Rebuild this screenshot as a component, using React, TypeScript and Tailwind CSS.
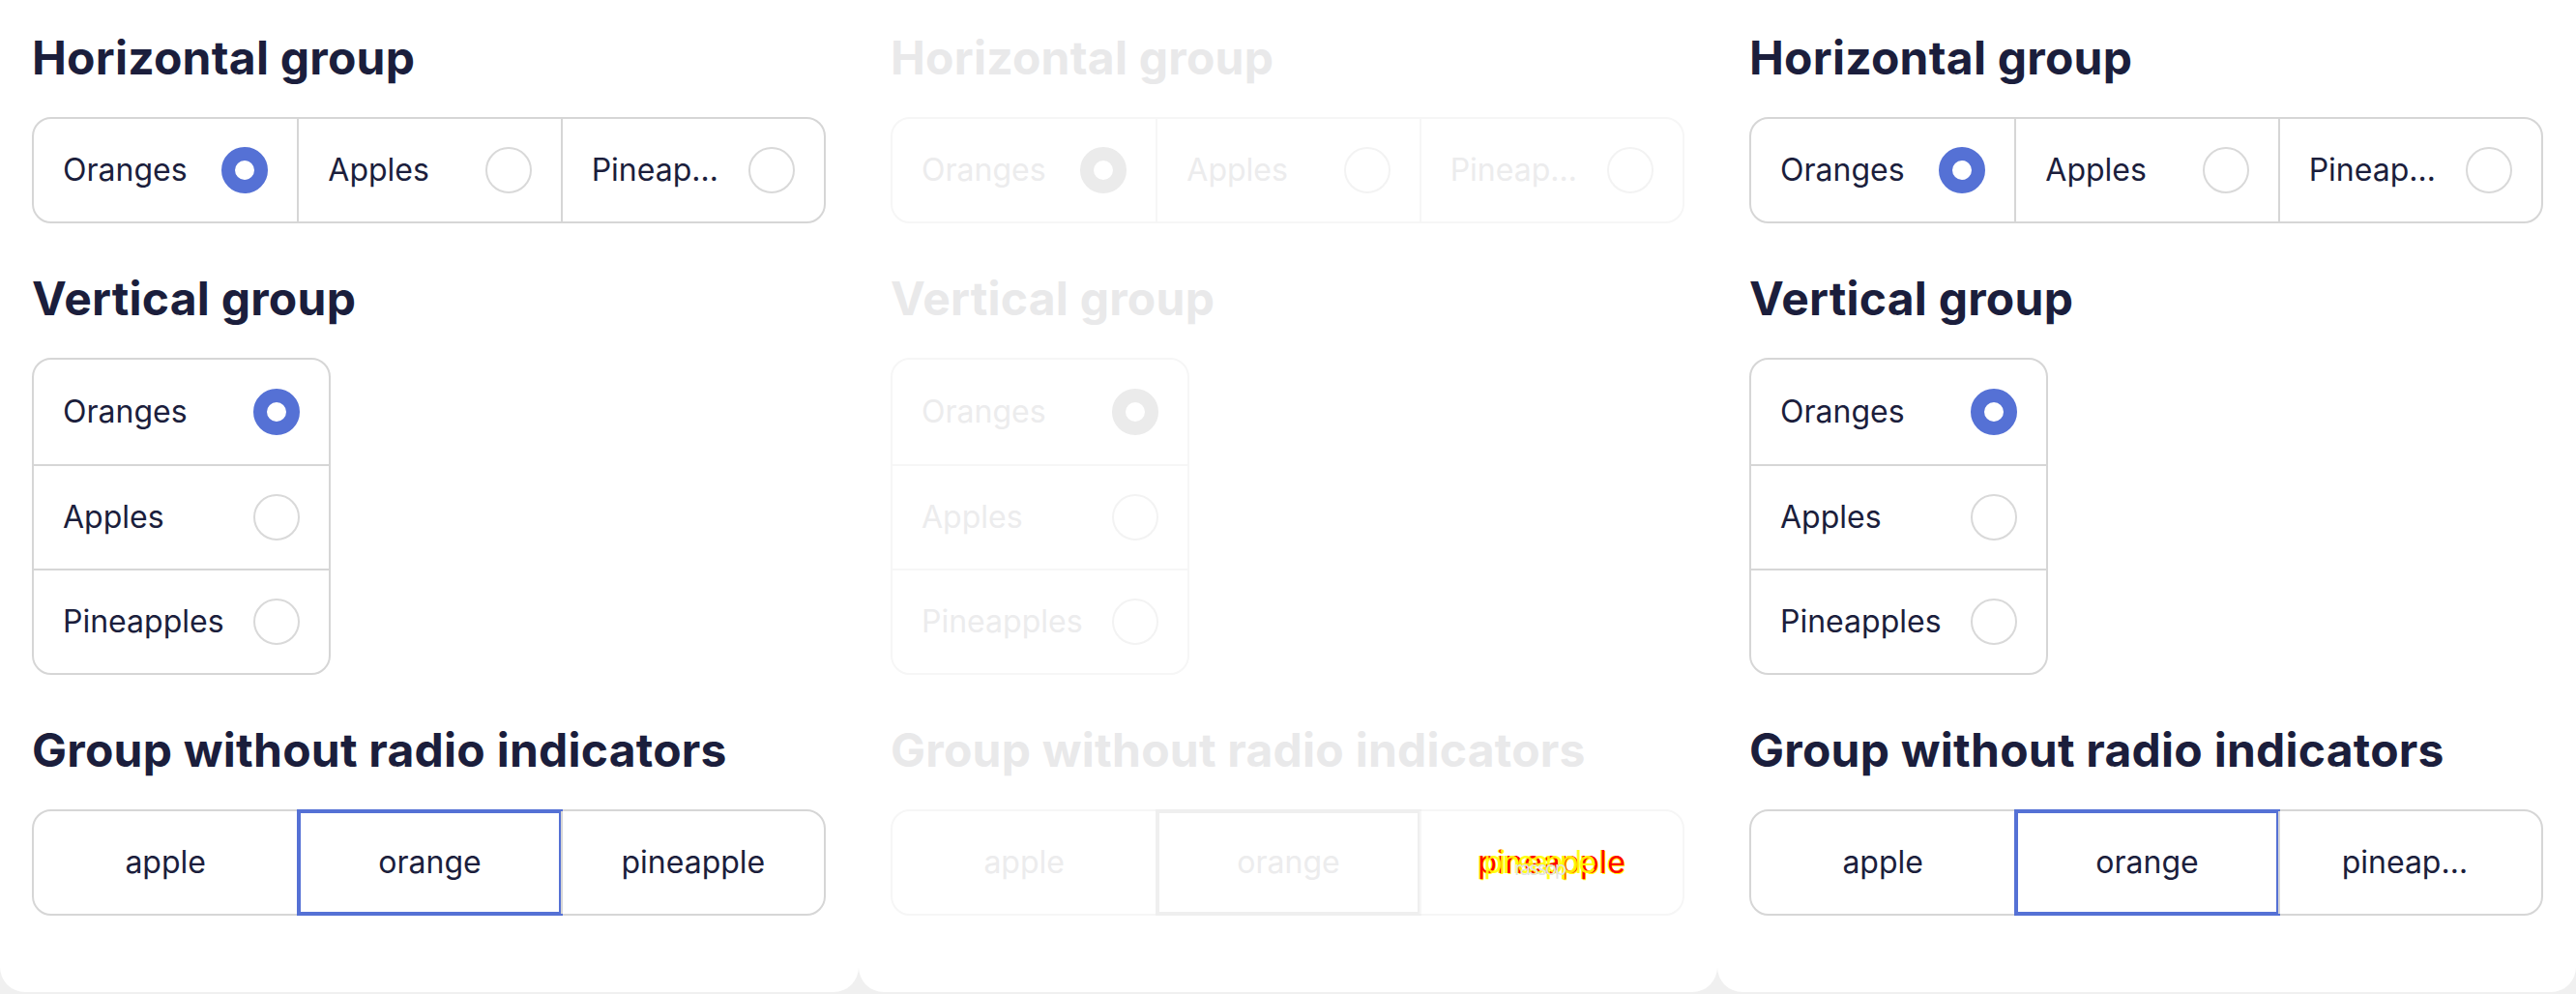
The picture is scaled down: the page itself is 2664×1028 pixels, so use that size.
import React from "react"

type Tone = {
  ink: string
  heading: string
  line: string
  dot: string
  ring: string
  focus: string
}

const normal: Tone = {
  ink: "text-[#1b1e3c]",
  heading: "text-[#1b1e3c]",
  line: "border-[#d6d6d6]",
  dot: "border-[#5571d5]",
  ring: "border-[#d9d9d9]",
  focus: "border-[#5571d5]",
}

const faded: Tone = {
  ink: "text-[#ececed]",
  heading: "text-[#e9e9ea]",
  line: "border-[#f6f6f6]",
  dot: "border-[#ebebeb]",
  ring: "border-[#f3f3f3]",
  focus: "border-[#efefef]",
}

const fruits = ["Oranges", "Apples", "Pineapples"]
const plain = ["apple", "orange", "pineapple"]

function Heading({ tone, children }: { tone: Tone; children: React.ReactNode }) {
  return (
    <h2 className={`text-[48px] leading-[58px] font-bold tracking-[0.005em] mb-[32px] ${tone.heading}`}>
      {children}
    </h2>
  )
}

function Radio({ checked, tone }: { checked: boolean; tone: Tone }) {
  return (
    <span
      className={`size-12 shrink-0 rounded-full bg-white ${checked ? `border-[14px] ${tone.dot}` : `border-2 ${tone.ring}`}`}
    />
  )
}

function HorizontalGroup({ tone }: { tone: Tone }) {
  return (
    <div className={`grid h-[110px] grid-cols-3 rounded-[20px] border-2 ${tone.line}`}>
      {fruits.map((label, i) => (
        <div
          key={label}
          className={`flex min-w-0 items-center gap-[30px] px-[30px] ${i > 0 ? `border-l-2 ${tone.line}` : ""}`}
        >
          <span className={`flex-1 min-w-0 truncate ${tone.ink}`}>{label}</span>
          <Radio checked={i === 0} tone={tone} />
        </div>
      ))}
    </div>
  )
}

function VerticalGroup({ tone }: { tone: Tone }) {
  return (
    <div className={`flex w-fit flex-col rounded-[20px] border-2 ${tone.line}`}>
      {fruits.map((label, i) => (
        <div
          key={label}
          className={`flex h-[108px] items-center gap-[30px] px-[30px] ${i > 0 ? `border-t-2 ${tone.line}` : ""}`}
        >
          <span className={`flex-1 ${tone.ink}`}>{label}</span>
          <Radio checked={i === 0} tone={tone} />
        </div>
      ))}
    </div>
  )
}

function GlitchLabel() {
  // the reference shows a broken render here: red text with a yellow double behind it
  return (
    <span className="relative inline-block">
      <span className="text-[#ff0000] tracking-[0.5px] [text-shadow:1px_1px_0_#ffff00,-1px_0_0_#ffff00]">pineapple</span>
      <span className="absolute left-[6px] top-0 text-[#ffff00] tracking-[-4px] opacity-90">pineapple</span>
      <span className="absolute left-[38px] top-[6px] text-[20px] text-[#e2e2e2] tracking-[-2px]">rassop</span>
    </span>
  )
}

function ButtonGroup({ tone, glitch, wideLast }: { tone: Tone; glitch?: boolean; wideLast?: boolean }) {
  return (
    <div className={`grid h-[110px] grid-cols-3 rounded-[20px] border-2 ${tone.line}`}>
      {plain.map((label, i) => (
        <div
          key={label}
          className={`relative flex min-w-0 items-center justify-center ${i > 0 ? `border-l-2 ${tone.line}` : ""} ${i === 2 && wideLast ? "px-[64px]" : "px-8"}`}
        >
          {i === 1 && <span className={`absolute -inset-[2px] border-[4px] ${tone.focus}`} />}
          {i === 2 && glitch ? (
            <GlitchLabel />
          ) : (
            <span className={`min-w-0 truncate ${tone.ink}`}>{label}</span>
          )}
        </div>
      ))}
    </div>
  )
}

function Panel({ tone, glitch, wideLast }: { tone: Tone; glitch?: boolean; wideLast?: boolean }) {
  return (
    <div className="h-[1026px] w-[888px] shrink-0 rounded-b-[26px] bg-white pl-[33px] pr-[34px] pt-[31px]">
      <div className="flex flex-col gap-[49px] text-[32px] leading-[40px]">
        <section>
          <Heading tone={tone}>Horizontal group</Heading>
          <HorizontalGroup tone={tone} />
        </section>
        <section>
          <Heading tone={tone}>Vertical group</Heading>
          <VerticalGroup tone={tone} />
        </section>
        <section>
          <Heading tone={tone}>Group without radio indicators</Heading>
          <ButtonGroup tone={tone} glitch={glitch} wideLast={wideLast} />
        </section>
      </div>
    </div>
  )
}

export default function App() {
  return (
    <div className="flex h-[1028px] w-[2664px] overflow-hidden bg-[#f0f0f0] font-['Inter',sans-serif]">
      <Panel tone={normal} />
      <Panel tone={faded} glitch />
      <Panel tone={normal} wideLast />
    </div>
  )
}
